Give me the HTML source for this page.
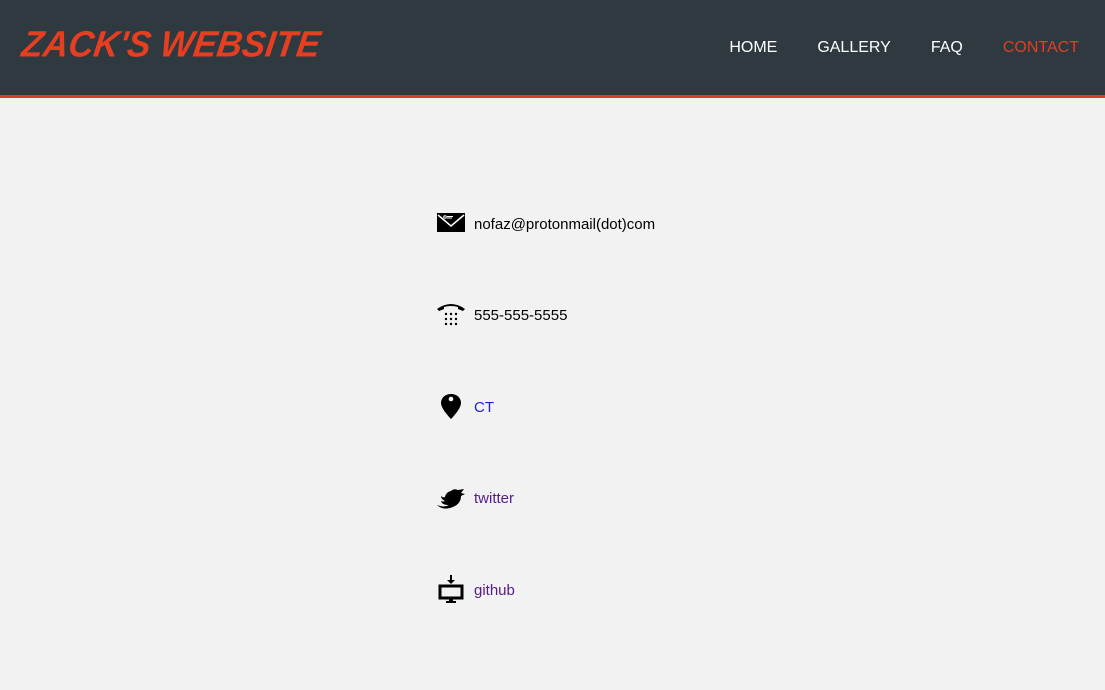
<!DOCTYPE html>
<html><head><meta charset="utf-8"><style>
body{margin:0;background:#f2f2f2;font-family:"Liberation Sans",Arial,sans-serif;width:1105px;height:690px;overflow:hidden}
header{height:95px;background:#2e3940;border-bottom:3px solid #e03c1f;position:relative}
.logo{position:absolute;left:22px;top:25px;color:#e53e20;font:italic 900 35px "Liberation Sans",sans-serif;letter-spacing:0;transform:skewX(-8deg) scaleY(1.05);text-transform:uppercase}
nav{position:absolute;right:26px;top:39px;font-size:16px}
nav a{color:#fff;text-decoration:none;margin-left:40px}
nav a.c{color:#e53e20}
.row{position:absolute;left:436px;display:flex;align-items:center;font-size:15px;color:#000}
.row svg{width:30px;height:30px;margin-right:8px}
.row a{text-decoration:none}
</style></head><body>
<header><div class="logo">Zack's Website</div>
<nav><a>HOME</a><a>GALLERY</a><a>FAQ</a><a class="c">CONTACT</a></nav></header>
<div class="row" style="top:209px"><svg viewBox="0 0 30 30"><rect x="1" y="4" width="28" height="19" fill="#000"/><path d="M2 6 L15 17 L28 6" stroke="#fff" stroke-width="1.5" fill="none"/><circle cx="9" cy="8" r="1.3" fill="none" stroke="#fff"/><path d="M11 7.5h6M11 9h5" stroke="#fff"/></svg>nofaz@protonmail(dot)com</div>
<div class="row" style="top:300px"><svg viewBox="0 0 30 30"><path d="M1 9 Q15 -1 29 9 L27 11 L22 9 L22 7 Q15 5 8 7 L8 9 L3 11Z" fill="#000"/><g fill="#000"><circle cx="10" cy="14" r="1.2"/><circle cx="15" cy="14" r="1.2"/><circle cx="20" cy="14" r="1.2"/><circle cx="10" cy="19" r="1.2"/><circle cx="15" cy="19" r="1.2"/><circle cx="20" cy="19" r="1.2"/><circle cx="10" cy="24" r="1.2"/><circle cx="15" cy="24" r="1.2"/><circle cx="20" cy="24" r="1.2"/></g></svg>555-555-5555</div>
<div class="row" style="top:392px"><svg viewBox="0 0 30 30"><path d="M15 2 C9 2 5 6 5 11 C5 17 15 27 15 27 C15 27 25 17 25 11 C25 6 21 2 15 2Z" fill="#000"/><circle cx="15" cy="7" r="2.3" fill="#fff"/></svg><a style="color:#1d1dd8">CT</a></div>
<div class="row" style="top:483px"><svg viewBox="0 0 30 30"><path d="M1 22 Q8 25 13 22 Q6 22 5 18 Q7 19 9 18 Q5 16 5 13 Q7 15 9 14 Q10 9 15 8 Q18 5 22 7 L28 6 L25 10 L29 11 L25 13 Q25 22 14 25 Q6 27 1 22Z" fill="#000"/></svg><a style="color:#551a8b">twitter</a></div>
<div class="row" style="top:575px"><svg viewBox="0 0 30 30"><path d="M15 0v6" stroke="#000" stroke-width="2"/><path d="M11 5h8l-4 4z" fill="#000"/><rect x="4" y="11" width="22" height="12" fill="none" stroke="#000" stroke-width="3"/><rect x="13" y="23" width="4" height="3" fill="#000"/><rect x="10" y="26" width="10" height="2" fill="#000"/></svg><a style="color:#551a8b">github</a></div>
</body></html>
